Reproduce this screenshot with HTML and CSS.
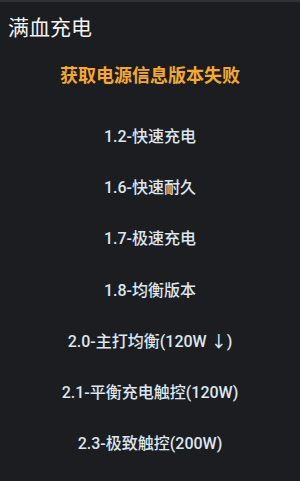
FILE: index.html
```html
<!DOCTYPE html>
<html lang="zh">
<head>
<meta charset="UTF-8" />
<meta name="viewport" content="width=device-width, initial-scale=1.0" />
<title>满血充电</title>
<link rel="stylesheet" href="styles.css">
</head>
<body>

<div class="pantalla">
  <div class="titulo">满血充电</div>
  <div class="aviso">获取电源信息版本失败</div>

  <ul class="versiones">
    <li>1.2-快速充电</li>
    <li>1.6-快速耐久</li>
    <li>1.7-极速充电</li>
    <li>1.8-均衡版本</li>
    <li>2.0-主打均衡(120W ↓)</li>
    <li>2.1-平衡充电触控(120W)</li>
    <li>2.3-极致触控(200W)</li>
  </ul>
</div>

</body>
</html>
```

FILE: styles.css
```css
body { margin: 0; background: #1c1d21; font-family: Roboto, "Noto Sans CJK SC", sans-serif; }
.pantalla { height: 481px; box-sizing: border-box; border-top: 2px solid #303136; overflow: hidden; }
.titulo { color: #f2f2f2; font-size: 21px; line-height: 26px; padding: 13px 0 0 8px; }
.aviso { color: #f3aa2c; font-size: 18px; font-weight: bold; text-align: center; line-height: 24px; margin-top: 23px; }
.versiones { list-style: none; margin: 38px 0 0; padding: 0; }
.versiones li { color: #dce6ef; font-size: 16px; font-weight: 500; text-align: center; height: 51.2px; line-height: 22px; }
```
